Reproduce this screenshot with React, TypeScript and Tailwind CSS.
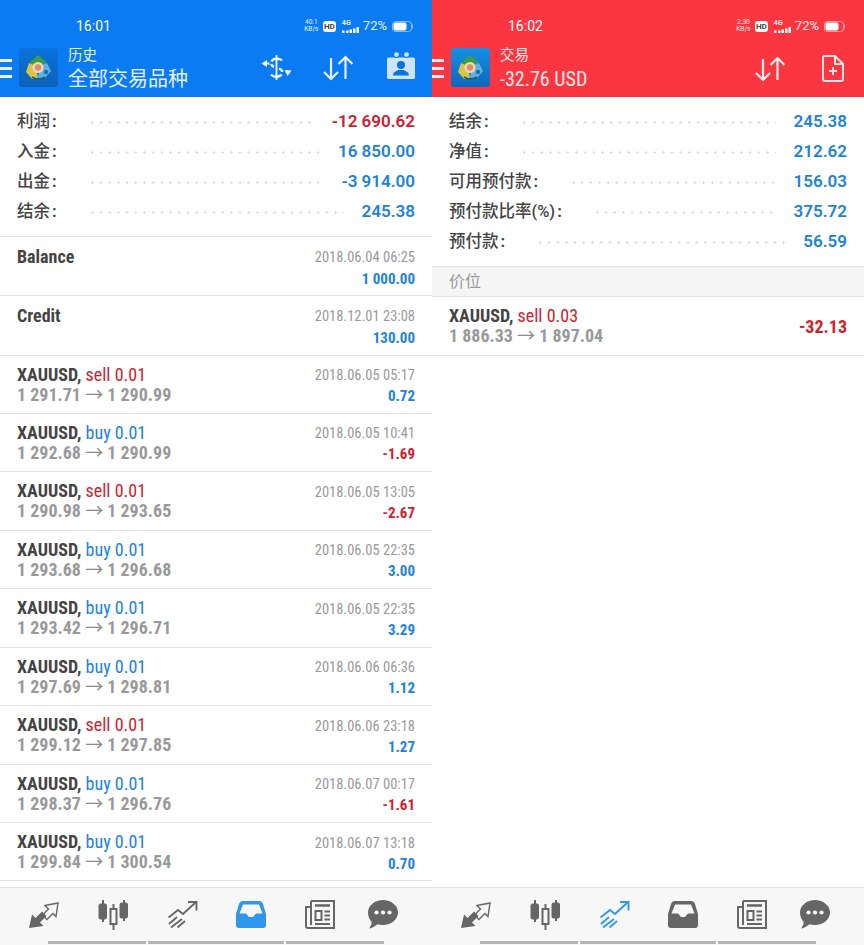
import React from "react";

const cn = "font-['Roboto','Noto_Sans_CJK_SC',sans-serif] [font-stretch:75%]";
const cjk = "font-['Roboto','Noto_Sans_CJK_SC',sans-serif]";

function Hamburger() {
  return (
    <div className="flex flex-col gap-[5px] w-[12px]">
      <div className="h-[3px] bg-white/90" />
      <div className="h-[3px] bg-white/90" />
      <div className="h-[3px] bg-white/90" />
    </div>
  );
}

function Logo({ bg }: { bg: string }) {
  return (
    <svg width="39" height="39" viewBox="0 0 39 39" className="shrink-0">
      <defs>
        <linearGradient id={"g" + bg} x1="0" y1="0" x2="0" y2="1">
          <stop offset="0" stopColor={bg === "blue" ? "#0a72dc" : "#1790e4"} />
          <stop offset="1" stopColor={bg === "blue" ? "#0b62b8" : "#0c68bc"} />
        </linearGradient>
      </defs>
      <rect width="39" height="39" rx="3" fill={`url(#g${bg})`} />
      <path d="M19 7 L27 14 L24 21 H14 L11 14 Z" fill="#3c9c48" />
      <path d="M10 15 L17 18 L19 30 L13 31 L7 24 Z" fill="#d8c445" />
      <path d="M28 15 L21 18 L19 30 L26 30 L32 23 Z" fill="#5fb2de" />
      <circle cx="19" cy="19.500" r="5.500" fill="#f0d8c0" />
      <circle cx="19" cy="19.500" r="3.200" fill="#e08e60" />
      <circle cx="27" cy="24" r="2.200" fill="#1f6fb0" />
      <path d="M13 29 Q19 33 26 29" stroke="#1c5f70" strokeWidth="1.800" fill="none" />
    </svg>
  );
}

function SortIcon() {
  return (
    <svg width="30" height="26" viewBox="0 0 30 26" fill="none" stroke="#fff" strokeOpacity=".9" strokeWidth="2.200">
      <path d="M8 3V24M1 17l7 7 7-7" />
      <path d="M22.500 24V2M15.500 9l7-7 7 7" />
    </svg>
  );
}

function DollarIcon() {
  return (
    <svg width="32" height="26" viewBox="0 0 32 26" fill="none" stroke="#fff" strokeOpacity=".92">
      <path d="M16.500 0v25" strokeWidth="1.800" />
      <path d="M22 5.500C19.500 3 13 3 11.500 6.500" strokeWidth="2.300" />
      <path d="M11.200 9c.2 1.500 1.200 2.300 2.800 2.900" strokeWidth="2.300" />
      <path d="M19 13.500c1.800.7 3.200 1.600 3.300 3.500" strokeWidth="2.300" />
      <path d="M21.500 19.500C19.500 22.500 13.500 22.500 11 19.500" strokeWidth="2.300" />
      <path d="M1.500 8.500 7 5 7 12Z" fill="#fff" stroke="none" />
      <path d="M6 8.500H9.500" strokeWidth="2.200" />
      <path d="M31.500 15.500 24.500 15 27.500 21Z" fill="#fff" stroke="none" />
    </svg>
  );
}

function CalendarIcon() {
  return (
    <svg width="28" height="27" viewBox="0 0 28 27">
      <rect x="0" y="5.500" width="28" height="21.500" rx="1.500" fill="#cfe3fb" />
      <circle cx="9.500" cy="3" r="3" fill="#0a7bf2" />
      <circle cx="19.500" cy="3" r="3" fill="#0a7bf2" />
      <circle cx="9.500" cy="2.600" r="2.400" fill="#cfe3fb" />
      <circle cx="19.500" cy="2.600" r="2.400" fill="#cfe3fb" />
      <circle cx="14" cy="13" r="4" fill="#0a72e0" />
      <path d="M6 23.500c0-4 4-4.500 5.500-5.500h5c1.500 1 5.500 1.500 5.500 5.500z" fill="#0a72e0" />
    </svg>
  );
}

function DocIcon() {
  return (
    <svg width="22" height="27" viewBox="0 0 22 27" fill="none" stroke="#ffe3e4" strokeWidth="2">
      <path d="M3 1h10l8 8v15a2 2 0 0 1-2 2H3a2 2 0 0 1-2-2V3a2 2 0 0 1 2-2z" />
      <path d="M13 1v8h8" />
      <path d="M11 12v8M7 16h8" />
    </svg>
  );
}

function StatusBar({ time, speed }: { time: string; speed: string }) {
  return (
    <div className="h-[44px] pt-[18px] flex items-start text-white">
      <span className="ml-[76px] text-[14px] leading-[16px] font-['Roboto',sans-serif]">{time}</span>
      <div className="ml-auto mr-[19px] flex items-center h-[16px] text-white/90">
        <div className="flex flex-col items-center text-[6.500px] leading-[7px] font-['Roboto',sans-serif] w-[15px]">
          <span>{speed}</span>
          <span>KB/s</span>
        </div>
        <span className="ml-[4px] w-[13px] h-[11px] rounded-[3px] bg-white text-[#444] text-[8px] leading-[11px] font-bold text-center font-['Roboto',sans-serif]">HD</span>
        <div className="ml-[6px] w-[18px] flex flex-col text-[7px] leading-[7px] font-bold font-['Roboto',sans-serif]">
          <span>4G</span>
          <svg width="18" height="6" viewBox="0 0 18 6" fill="#fff">
            <rect x="0" y="3.500" width="2.500" height="2.500" /><rect x="4" y="3.500" width="2.500" height="2.500" /><rect x="7.500" y="2.500" width="2.500" height="3.500" /><rect x="11" y="1.500" width="2.500" height="4.500" /><rect x="14.500" y="0" width="2.500" height="6" />
          </svg>
        </div>
        <span className="ml-[3px] text-[13px] font-['Roboto',sans-serif]">72%</span>
        <svg className="ml-[5px]" width="21" height="11" viewBox="0 0 21 11">
          <rect x=".5" y=".5" width="19" height="10" rx="3" fill="none" stroke="#fff" strokeOpacity=".5" />
          <rect x="1.500" y="1.500" width="13" height="8" rx="2" fill="#fff" />
          <rect x="20" y="3.500" width="1" height="4" fill="#fff" fillOpacity=".5" />
        </svg>
      </div>
    </div>
  );
}

function Summary({ rows }: { rows: { l: string; v: string; neg?: boolean }[] }) {
  return (
    <div className="pt-[10px] pb-[9px] border-b border-[#dfe3e6] px-[17px]">
      {rows.map((r) => (
        <div key={r.l} className="h-[30px] flex items-center">
          <span className={`${cjk} text-[16.500px] font-medium text-[#444] whitespace-nowrap`}>
            {r.l}
            <span className="ml-[2px] font-bold">:</span>
          </span>
          <div className="flex-1 h-[3px] ml-[31px] mr-[18px] bg-[radial-gradient(circle,#dcdcdc_1px,transparent_1.200px)] bg-[length:8.700px_3px]" />
          <span className={`font-['Roboto',sans-serif] text-[17px] font-semibold ${r.neg ? "text-[#d0202e]" : "text-[#1c82df]"}`}>{r.v}</span>
        </div>
      ))}
    </div>
  );
}

function Note({ title, date, value }: { title: string; date: string; value: string }) {
  return (
    <div className="h-[59.250px] px-[17px] pt-[10px] flex justify-between border-b border-[#dfe3e6]">
      <span className={`${cn} text-[18px] leading-[20px] font-bold text-[#444]`}>{title}</span>
      <div className="flex flex-col items-end">
        <span className={`${cn} text-[14.500px] leading-[22px] text-[#999]`}>{date}</span>
        <span className={`${cn} text-[15px] leading-[20px] font-bold text-[#1c82df]`}>{value}</span>
      </div>
    </div>
  );
}

function Arrow() {
  return <span className="font-normal [font-stretch:100%] text-[#8c8c8c]">→</span>;
}

type T = { side: "sell" | "buy"; lot: string; p: string; q: string; date: string; v: string };

function Trade({ side, lot, p, q, date, v }: T) {
  const neg = v.startsWith("-");
  return (
    <div className="h-[58.440px] px-[17px] pt-[8px] flex justify-between border-b border-[#dfe3e6]">
      <div className={`${cn} flex flex-col`}>
        <span className="text-[18px] leading-[21px] whitespace-nowrap">
          <span className="font-bold text-[#444]">XAUUSD, </span>
          <span className={side === "sell" ? "text-[#d0202e]" : "text-[#1c82df]"}>{side} {lot}</span>
        </span>
        <span className="text-[18px] leading-[20px] font-bold text-[#999] whitespace-nowrap">{p} <Arrow /> {q}</span>
      </div>
      <div className="flex flex-col items-end pt-[1.500px]">
        <span className={`${cn} text-[14.500px] leading-[21px] text-[#999]`}>{date}</span>
        <span className={`${cn} text-[15px] leading-[20px] font-bold ${neg ? "text-[#d0202e]" : "text-[#1c82df]"}`}>{v}</span>
      </div>
    </div>
  );
}

const G = "#666";
const B = "#2f96ee";

function NavTrade() {
  return (
    <svg width="30" height="26" viewBox="0 0 30 26" fill="none">
      <path d="M0 26 3 12.500 6.500 16 13 9.500 17.500 14 11 20.500 14.500 24z" fill={G} />
      <path d="M29 1 16 3.500 19.500 7 13.500 13 18 17.500 24 11.500 27 14.500z" stroke={G} strokeWidth="1.400" />
    </svg>
  );
}
function NavCandle() {
  return (
    <svg width="31" height="30" viewBox="0 0 31 30" fill="none" stroke={G}>
      <path d="M5 0v22M26 0v21M15.500 4v26" strokeWidth="2" />
      <rect x="1" y="4" width="7.500" height="15" rx="1.500" fill={G} strokeWidth="1" />
      <rect x="22" y="3" width="7.500" height="15" rx="1.500" fill={G} strokeWidth="1" />
      <rect x="12.500" y="9" width="6" height="15" fill="#f7f7f7" strokeWidth="2" />
    </svg>
  );
}
function NavChart({ c }: { c: string }) {
  return (
    <svg width="30" height="27" viewBox="0 0 30 27" fill="none" stroke={c} strokeWidth="1.900">
      <path d="M0.500 16.500 10 9 15 13 27.500 1.500" />
      <path d="M20 1h8.500v8.500" />
      <path d="M1 23 9 16M3 26.500 14 18M9.500 26.500 17 20" />
    </svg>
  );
}
function NavInbox({ c }: { c: string }) {
  return (
    <svg width="30" height="27" viewBox="0 0 30 27">
      <path d="M7 0h16q3 0 4 3l3 10v11q0 3-3 3H3q-3 0-3-3V13L3 3q1-3 4-3z" fill={c} />
      <path d="M7 3.500h16l3.500 9H20l-3 3.500h-4l-3-3.500H3.500z" fill="#f7f7f7" />
    </svg>
  );
}
function NavNews() {
  return (
    <svg width="30" height="29" viewBox="0 0 30 29" fill="none" stroke={G} strokeWidth="2">
      <path d="M6 1h23v27H3a2 2 0 0 1-2-2V7h5" />
      <path d="M6 1v24" />
      <path d="M10 5.500h15" strokeWidth="2.500" />
      <rect x="10.500" y="11" width="6" height="9" />
      <path d="M19.500 11.500H25M19.500 15.500H25M19.500 19.500H25M10 24H25" />
    </svg>
  );
}
function NavChat() {
  return (
    <svg width="30" height="29" viewBox="0 0 30 29">
      <path d="M15 0c8 0 15 5.500 15 12.500S23 25 15 25c-2 0-4-.3-5.500-.8C7 26.500 4 28 1 28.500c1.500-2 2.500-4 2.700-6.500C1.400 19.500 0 16.500 0 12.500 0 5.500 7 0 15 0z" fill={G} />
      <circle cx="8.500" cy="12.500" r="2.100" fill="#fff" />
      <circle cx="15" cy="12.500" r="2.100" fill="#fff" />
      <circle cx="21.500" cy="12.500" r="2.100" fill="#fff" />
    </svg>
  );
}

function BottomNav({ active }: { active: "chart" | "inbox" }) {
  return (
    <div className="h-[58px] shrink-0 bg-[#f7f7f7] border-t border-[#e2e2e2] flex flex-col">
      <div className="h-[53px] pl-[29px] flex items-center gap-[39px]">
        <NavTrade />
        <NavCandle />
        <NavChart c={active === "chart" ? B : G} />
        <div className="-ml-[1px]"><NavInbox c={active === "inbox" ? B : G} /></div>
        <NavNews />
        <div className="-ml-[6px]"><NavChat /></div>
      </div>
      <div className="flex gap-[2px] pl-[48px]">
        <div className="w-[98px] h-[3px] bg-[#b5b5b5]" />
        <div className="w-[136px] h-[3px] bg-[#b5b5b5]" />
        <div className="w-[98px] h-[3px] bg-[#b5b5b5]" />
      </div>
    </div>
  );
}

const trades: T[] = [
  { side: "sell", lot: "0.01", p: "1 291.71", q: "1 290.99", date: "2018.06.05 05:17", v: "0.72" },
  { side: "buy", lot: "0.01", p: "1 292.68", q: "1 290.99", date: "2018.06.05 10:41", v: "-1.69" },
  { side: "sell", lot: "0.01", p: "1 290.98", q: "1 293.65", date: "2018.06.05 13:05", v: "-2.67" },
  { side: "buy", lot: "0.01", p: "1 293.68", q: "1 296.68", date: "2018.06.05 22:35", v: "3.00" },
  { side: "buy", lot: "0.01", p: "1 293.42", q: "1 296.71", date: "2018.06.05 22:35", v: "3.29" },
  { side: "buy", lot: "0.01", p: "1 297.69", q: "1 298.81", date: "2018.06.06 06:36", v: "1.12" },
  { side: "sell", lot: "0.01", p: "1 299.12", q: "1 297.85", date: "2018.06.06 23:18", v: "1.27" },
  { side: "buy", lot: "0.01", p: "1 298.37", q: "1 296.76", date: "2018.06.07 00:17", v: "-1.61" },
  { side: "buy", lot: "0.01", p: "1 299.84", q: "1 300.54", date: "2018.06.07 13:18", v: "0.70" },
];

export default function App() {
  return (
    <div className="w-[864px] h-[945px] flex overflow-hidden bg-white">
      <div className="w-[432px] h-full flex flex-col">
        <header className="h-[97px] shrink-0 bg-[#0a7bf2]">
          <StatusBar time="16:01" speed="40.1" />
          <div className="flex items-start pt-[4px] pr-[17px] text-white">
            <div className="pt-[11px]"><Hamburger /></div>
            <div className="ml-[7px]"><Logo bg="blue" /></div>
            <div className={`${cjk} ml-[10px] -mt-[2px] flex flex-col`}>
              <span className="text-[14.500px] leading-[20px] text-white/90">历史</span>
              <span className="text-[20px] leading-[26px] text-white/90">全部交易品种</span>
            </div>
            <div className="ml-auto flex items-start gap-[31px] pt-[7px]">
              <DollarIcon />
              <SortIcon />
              <div className="ml-[3px] -mt-[3px]"><CalendarIcon /></div>
            </div>
          </div>
        </header>
        <main className="flex-1 min-h-0 overflow-hidden">
          <Summary rows={[
            { l: "利润", v: "-12 690.62", neg: true },
            { l: "入金", v: "16 850.00" },
            { l: "出金", v: "-3 914.00" },
            { l: "结余", v: "245.38" },
          ]} />
          <Note title="Balance" date="2018.06.04 06:25" value="1 000.00" />
          <Note title="Credit" date="2018.12.01 23:08" value="130.00" />
          {trades.map((t) => <Trade key={t.date + t.v} {...t} />)}
        </main>
        <BottomNav active="inbox" />
      </div>
      <div className="w-[432px] h-full flex flex-col">
        <header className="h-[97px] shrink-0 bg-[#fb3640]">
          <StatusBar time="16:02" speed="2.30" />
          <div className="flex items-start pt-[4px] pr-[20px] text-white">
            <div className="pt-[11px]"><Hamburger /></div>
            <div className="ml-[7px]"><Logo bg="red" /></div>
            <div className={`${cjk} ml-[10px] -mt-[2px] flex flex-col`}>
              <span className="text-[14.500px] leading-[20px] text-white/90">交易</span>
              <span className={`${cn} text-[20px] leading-[26px] text-white/90`}>-32.76 USD</span>
            </div>
            <div className="ml-auto flex items-center gap-[37px] pt-[7px]">
              <SortIcon />
              <DocIcon />
            </div>
          </div>
        </header>
        <main className="flex-1 min-h-0 overflow-hidden">
          <Summary rows={[
            { l: "结余", v: "245.38" },
            { l: "净值", v: "212.62" },
            { l: "可用预付款", v: "156.03" },
            { l: "预付款比率(%)", v: "375.72" },
            { l: "预付款", v: "56.59" },
          ]} />
          <div className={`${cjk} h-[30px] px-[17px] flex items-center bg-[#f5f5f5] border-b border-[#dfe3e6] text-[16px] text-[#999]`}>价位</div>
          <div className="h-[59px] px-[17px] pt-[8px] flex justify-between items-center border-b border-[#dfe3e6]">
            <div className={`${cn} flex flex-col self-start`}>
              <span className="text-[18px] leading-[21px] whitespace-nowrap">
                <span className="font-bold text-[#444]">XAUUSD, </span>
                <span className="text-[#d0202e]">sell 0.03</span>
              </span>
              <span className="text-[18px] leading-[20px] font-bold text-[#999] whitespace-nowrap">1 886.33 <Arrow /> 1 897.04</span>
            </div>
            <span className={`${cn} text-[18px] font-bold text-[#d0202e] -mt-[8px]`}>-32.13</span>
          </div>
        </main>
        <BottomNav active="chart" />
      </div>
    </div>
  );
}
